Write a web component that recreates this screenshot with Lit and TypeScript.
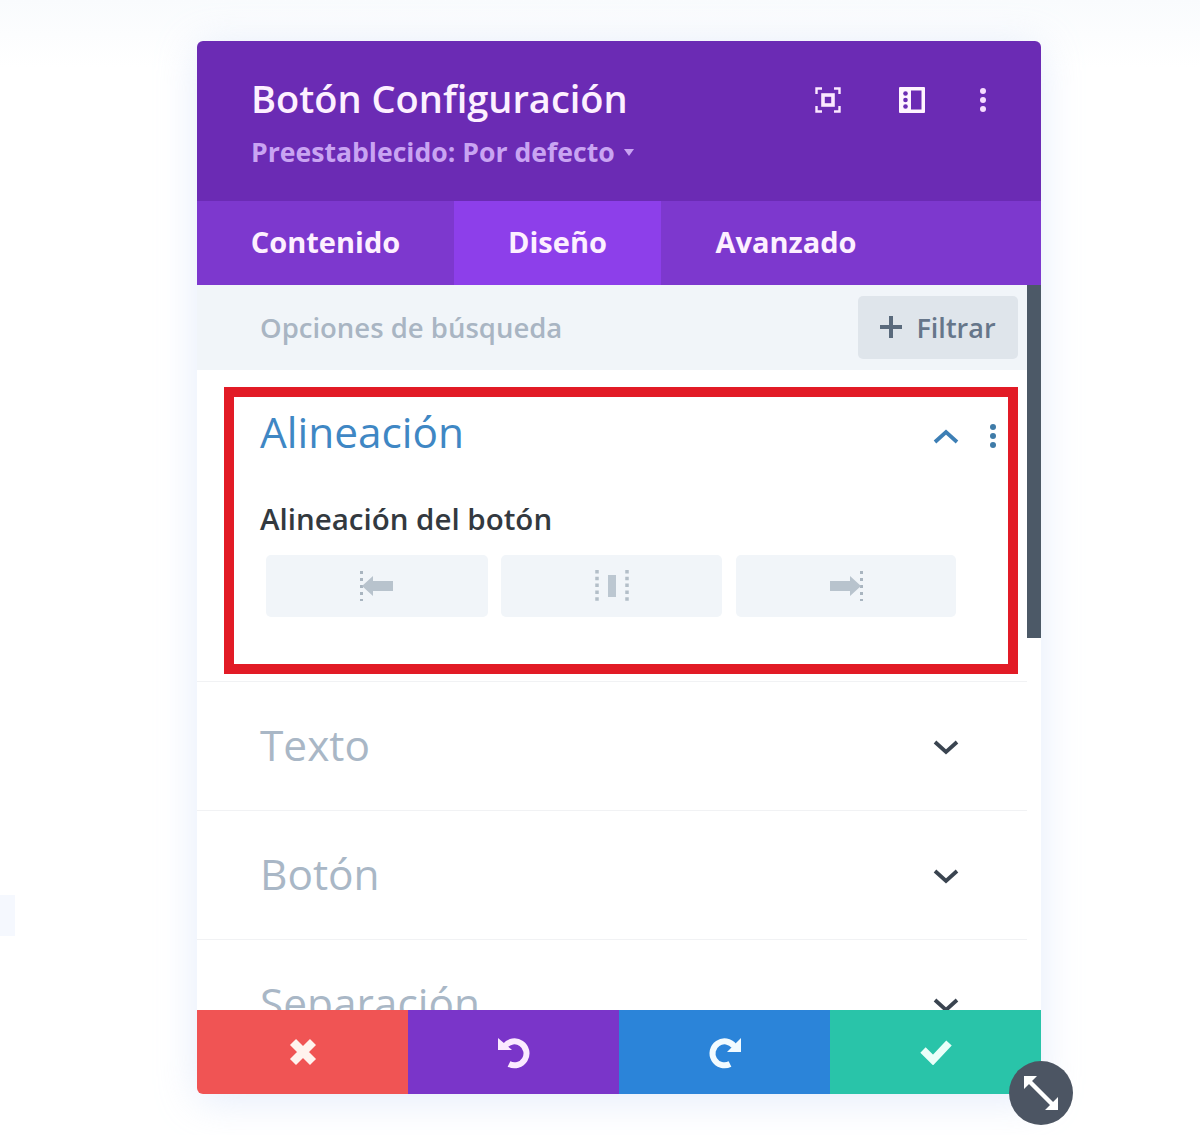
import { LitElement, html, css, svg } from "lit";
import { customElement } from "lit/decorators.js";

const kebab = (c: string) => svg`<svg class="ico" width="8" height="26" viewBox="0 0 8 26"><circle cx="4" cy="4" r="3" fill="${c}"/><circle cx="4" cy="13" r="3" fill="${c}"/><circle cx="4" cy="22" r="3" fill="${c}"/></svg>`;
const chev = (c: string, up = false) => svg`<svg class="chev" width="26" height="16" viewBox="0 0 26 16"><path d="${up ? "M2 14 L13 4 L24 14" : "M2 3 L13 13 L24 3"}" fill="none" stroke="${c}" stroke-width="3.8"/></svg>`;

@customElement("app-root")
export class AppRoot extends LitElement {
  static styles = css`
    :host { display: block; width: 1200px; height: 1135px; background: #fff; font-family: "Open Sans", sans-serif; overflow: hidden; position: relative; }
    .page { height: 1135px; padding: 41px 159px 41px 197px; box-sizing: border-box; background: linear-gradient(#f9fbfd, #fff 6%); }
    .blob { position: absolute; left: 0; top: 895px; width: 15px; height: 41px; background: #f5f8fe; }
    .panel { position: relative; height: 1053px; display: flex; flex-direction: column; border-radius: 6px; background: #fff; box-shadow: 0 6px 40px rgba(190, 210, 245, .42); }
    .head { height: 160px; flex: none; background: #6b2bb4; border-radius: 6px 6px 0 0; padding: 31px 54px 0 54px; box-sizing: border-box; display: flex; justify-content: space-between; color: #fff; }
    h1 { margin: 0; font-size: 38px; font-weight: 600; line-height: 52px; color: #fdf0ff; }
    .preset { font-size: 26.6px; font-weight: 700; line-height: 38px; margin-top: 9px; color: #c9a4f2; display: flex; align-items: center; gap: 9px; }
    .caret { width: 0; height: 0; border: 5.5px solid transparent; border-top: 7px solid #c9a4f2; border-bottom: 0; }
    .head-icons { display: flex; align-items: center; height: 52px; margin-top: 2px; }
    .head-icons svg { display: block; }
    .i1 { margin-right: 58px; }
    .i2 { margin-right: 54px; }
    .tabs { height: 84px; flex: none; display: flex; background: #7d38ce; color: #fdf0ff; font-size: 29px; font-weight: 700; }
    .tab { display: flex; align-items: center; justify-content: center; padding-bottom: 4px; box-sizing: border-box; }
    .t1 { width: 257px; }
    .t2 { width: 207px; background: #8d3fea; }
    .t3 { width: 250px; }
    .body { flex: 1; min-height: 0; overflow: hidden; position: relative; }
    .search { height: 85px; background: #f1f5f9; display: flex; align-items: center; justify-content: space-between; padding: 0 9px 0 63px; margin-right: 14px; }
    .ph { font-size: 27.5px; font-weight: 600; color: #a9b5c3; }
    .filter { width: 160px; height: 63px; border-radius: 5px; background: #dfe5eb; display: flex; align-items: center; justify-content: center; gap: 14px; color: #66768a; font-size: 27px; font-weight: 600; margin-top: -1px; }
    .row { height: 128px; border-bottom: 1px solid #f1f2f4; margin-right: 14px; padding: 0 68px 0 63px; display: flex; align-items: center; justify-content: space-between; }
    .row .chev { margin-top: 1px; }
    .row-title { font-size: 42.4px; line-height: 56px; color: #a9b7c6; font-weight: 400; margin-top: -3px; }
    .open-sec { height: 312px; border-bottom: 1px solid #f1f2f4; margin-right: 14px; padding: 0 30px 0 63px; box-sizing: border-box; }
    .open-head { display: flex; justify-content: space-between; align-items: center; padding-top: 34px; }
    .open-head .row-title { color: #3f87c4; margin-top: 0; }
    .open-icons { display: flex; align-items: center; gap: 30px; padding-top: 7px; }
    .open-icons svg { display: block; }
    .label { font-size: 29.5px; font-weight: 600; color: #33393f; line-height: 40px; margin-top: 39px; }
    .btns { display: grid; grid-template-columns: 222px 221px 221px; column-gap: 13px; margin: 16px 0 0 6px; }
    .btn { height: 62px; border-radius: 5px; background: #f1f5f9; display: flex; align-items: center; justify-content: center; }
    .btn.last { margin-left: 1px; }
    .scroll { position: absolute; right: 0; top: 0; width: 14px; height: 353px; background: #4c5967; }
    .red { position: absolute; left: 27px; top: 102px; width: 794px; height: 287px; border: 10px solid #e21b26; box-sizing: border-box; pointer-events: none; }
    .foot { height: 84px; flex: none; display: grid; grid-template-columns: repeat(4, 1fr); border-radius: 0 0 6px 6px; overflow: hidden; }
    .foot div { display: flex; align-items: center; justify-content: center; }
    .foot .ud { margin-top: 2px; }
    .c-red { background: #f05454; }
    .c-pur { background: #7a35c9; }
    .c-blu { background: #2b84d9; }
    .c-grn { background: #29c4a9; }
    .resize { position: absolute; right: -32px; bottom: -31px; width: 64px; height: 64px; border-radius: 50%; background: #4c5563; display: flex; align-items: center; justify-content: center; }
  `;

  render() {
    return html`<div class="page"><div class="blob"></div><div class="panel">
      <div class="head">
        <div>
          <h1>Botón Configuración</h1>
          <div class="preset">Preestablecido: Por defecto <span class="caret"></span></div>
        </div>
        <div class="head-icons">
          <svg class="i1" width="26" height="26" viewBox="0 0 26 26" fill="none" stroke="#fbe8ff" stroke-width="2.4"><path d="M7 1.500H1.500V7M19 1.500H24.500V7M7 24.500H1.500V19M19 24.500H24.500V19"/><rect x="8" y="8" width="10" height="10" stroke-width="3.600"/></svg>
          <svg class="i2" width="26" height="26" viewBox="0 0 26 26"><rect width="26" height="26" rx="1" fill="#fff4ff"/><rect x="12" y="3.500" width="10.500" height="19" fill="#6b2bb4"/><circle cx="6.500" cy="6.500" r="2.300" fill="#6b2bb4"/><circle cx="6.500" cy="13" r="2.300" fill="#6b2bb4"/><circle cx="6.500" cy="19.500" r="2.300" fill="#6b2bb4"/></svg>
          ${kebab("#f6dcff")}
        </div>
      </div>
      <div class="tabs"><div class="tab t1">Contenido</div><div class="tab t2">Diseño</div><div class="tab t3">Avanzado</div></div>
      <div class="body">
        <div class="search"><span class="ph">Opciones de búsqueda</span>
          <div class="filter"><svg width="22" height="22" viewBox="0 0 22 22"><path d="M11 0V22M0 11H22" stroke="#5a6a7c" stroke-width="4"/></svg>Filtrar</div></div>
        <div class="open-sec">
          <div class="open-head"><div class="row-title">Alineación</div>
            <div class="open-icons">${chev("#3d7fb5", true)}${kebab("#3f7ba8")}</div></div>
          <div class="label">Alineación del botón</div>
          <div class="btns">
            <div class="btn"><svg width="36" height="34" viewBox="0 0 36 34"><path d="M2.500 2V32" stroke="#a9b5c0" stroke-width="3" stroke-dasharray="3 4"/><path d="M3 17L14 7V12H34V22H14V27Z" fill="#b8c3cd"/></svg></div>
            <div class="btn"><svg width="36" height="34" viewBox="0 0 36 34"><path d="M3 1V33M33 1V33" stroke="#b3bec8" stroke-width="3.500" stroke-dasharray="3.500 3.300"/><rect x="14" y="6" width="8" height="22" fill="#bcc7d1"/></svg></div>
            <div class="btn last"><svg width="36" height="34" viewBox="0 0 36 34"><path d="M33.500 2V32" stroke="#a9b5c0" stroke-width="3" stroke-dasharray="3 4"/><path d="M33 17L22 7V12H2V22H22V27Z" fill="#b8c3cd"/></svg></div>
          </div>
        </div>
        <div class="row"><div class="row-title">Texto</div>${chev("#3a4450")}</div>
        <div class="row"><div class="row-title">Botón</div>${chev("#3a4450")}</div>
        <div class="row"><div class="row-title">Separación</div>${chev("#3a4450")}</div>
        <div class="scroll"></div>
        <div class="red"></div>
      </div>
      <div class="foot">
        <div class="c-red"><svg width="30" height="30" viewBox="0 0 30 30"><path d="M5 5L25 25M25 5L5 25" stroke="#fff3ee" stroke-width="8.500"/></svg></div>
        <div class="c-pur"><svg class="ud" width="34" height="34" viewBox="0 0 34 34" fill="none"><path d="M8 10A12 12 0 1 1 12 28" stroke="#fbeaff" stroke-width="6"/><path d="M1 2L15 14H1Z" fill="#fbeaff"/></svg></div>
        <div class="c-blu"><svg class="ud" width="34" height="34" viewBox="0 0 34 34" fill="none"><path d="M26 10A12 12 0 1 0 22 28" stroke="#f2fbff" stroke-width="6"/><path d="M33 2V16H19Z" fill="#f2fbff"/></svg></div>
        <div class="c-grn"><svg width="32" height="26" viewBox="0 0 32 26" fill="none"><path d="M3 11L13 21L29 4" stroke="#eafff9" stroke-width="7.500"/></svg></div>
      </div>
      <div class="resize"><svg width="36" height="36" viewBox="0 0 36 36"><path d="M7 7L29 29" stroke="#fff" stroke-width="4.500"/><path d="M1 1H14L1 14ZM35 35H22L35 22Z" fill="#fff"/></svg></div>
    </div></div>`;
  }
}
